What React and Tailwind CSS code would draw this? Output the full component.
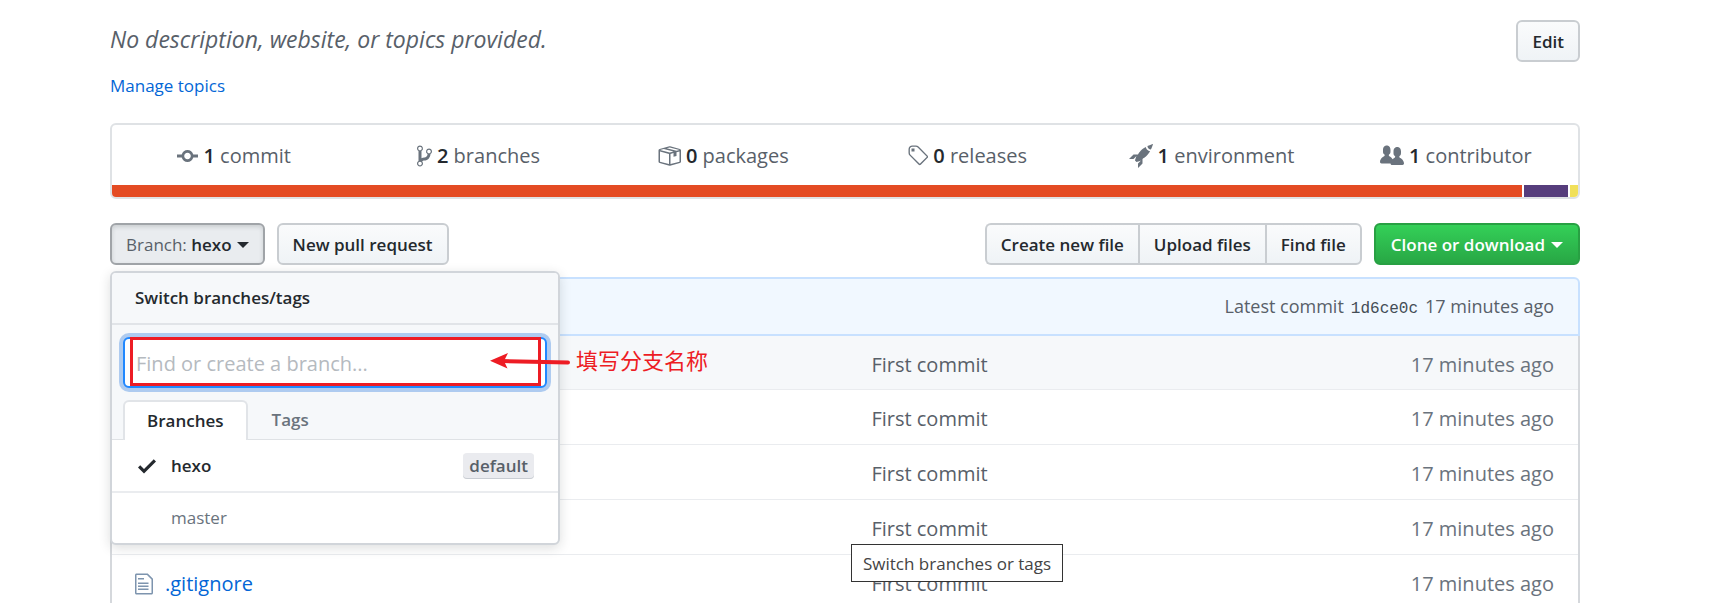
import React from "react";

const ICONS = {
  commit: {
    w: 14,
    d: "M10.86 7c-.45-1.72-2-3-3.86-3-1.86 0-3.41 1.28-3.86 3H0v2h3.14c.45 1.72 2 3 3.86 3 1.86 0 3.41-1.28 3.86-3H14V7h-3.14zM7 10.2c-1.22 0-2.2-.98-2.2-2.2 0-1.22.98-2.2 2.2-2.2 1.22 0 2.2.98 2.2 2.2 0 1.22-.98 2.2-2.2 2.2z",
  },
  branch: {
    w: 10,
    d: "M10 5c0-1.11-.89-2-2-2a1.993 1.993 0 0 0-1 3.72v.3c-.02.52-.23.98-.63 1.38-.4.4-.86.61-1.38.63-.83.02-1.48.16-2 .45V4.72a1.993 1.993 0 0 0-1-3.72C.88 1 0 1.89 0 3a2 2 0 0 0 1 1.72v6.56c-.59.35-1 .99-1 1.72 0 1.11.89 2 2 2 1.11 0 2-.89 2-2 0-.53-.2-1-.53-1.36.09-.06.48-.41.59-.47.25-.11.56-.17.94-.17 1.05-.05 1.95-.45 2.75-1.25S8.95 7.77 9 6.73h-.02C9.59 6.37 10 5.73 10 5zM2 1.8c.66 0 1.2.55 1.2 1.2 0 .65-.55 1.2-1.2 1.2C1.35 4.2.8 3.65.8 3c0-.65.55-1.2 1.2-1.2zm0 12.41c-.66 0-1.2-.55-1.2-1.2 0-.65.55-1.2 1.2-1.2.65 0 1.2.55 1.2 1.2 0 .65-.55 1.2-1.2 1.2zm6-8c-.66 0-1.2-.55-1.2-1.2 0-.65.55-1.2 1.2-1.2.65 0 1.2.55 1.2 1.2 0 .65-.55 1.2-1.2 1.2z",
  },
  box: {
    w: 16,
    d: "M1 4.27v7.47c0 .45.3.84.75.97l6.5 1.73c.16.05.34.05.5 0l6.5-1.73c.45-.13.75-.52.75-.97V4.27c0-.45-.3-.84-.75-.97l-6.5-1.74a1.4 1.4 0 0 0-.5 0L1.75 3.3c-.45.13-.75.52-.75.97zm7 9.09l-6-1.59V5l6 1.61v6.75zM2 4l2.5-.67L11 5.06l-2.5.67L2 4zm13 7.77l-6 1.59V6.61l2-.55V8.5l2-.53V5.53L15 5v6.77zm-2-7.24L6.5 2.8l2-.53L15 4l-2 .53z",
  },
  tag: {
    w: 14,
    d: "M7.73 1.73C7.26 1.26 6.62 1 5.96 1H3.5C2.13 1 1 2.13 1 3.5v2.47c0 .66.27 1.3.73 1.77l6.06 6.06c.39.39 1.02.39 1.41 0l4.59-4.59a.996.996 0 0 0 0-1.41L7.73 1.73zM2.38 7.09c-.31-.3-.47-.7-.47-1.13V3.5c0-.88.72-1.59 1.59-1.59h2.47c.42 0 .83.16 1.13.47l6.14 6.13-4.73 4.73-6.13-6.15zM3.01 3h2v2H3V3h.01z",
  },
  rocket: {
    w: 16,
    d: "M12.17 3.83c-.27-.27-.47-.55-.63-.88-.16-.31-.27-.66-.34-1.02-.58.33-1.16.7-1.73 1.13-.58.44-1.14.94-1.69 1.48-.7.7-1.33 1.81-1.78 2.45H3L0 10h3l2-2c-.34.77-1.02 2.98-1 3l1 1c.02.02 2.23-.64 3-1l-2 2v3l3-3v-3c.64-.45 1.75-1.09 2.45-1.78.55-.55 1.05-1.13 1.47-1.7.44-.58.81-1.16 1.14-1.72-.36-.08-.7-.19-1.03-.34a3.39 3.39 0 0 1-.86-.63zM16 0s-.09.38-.3 1.06c-.2.7-.55 1.58-1.06 2.66-.7-.08-1.27-.33-1.66-.72-.39-.39-.63-.94-.7-1.64C13.36.84 14.23.48 14.92.28 15.62.08 16 0 16 0z",
  },
  people: {
    w: 16,
    d: "M16 12.999c0 .439-.45 1-1 1H7.995c-.539 0-.994-.447-.995-.999H1c-.54 0-1-.561-1-1 0-2.634 3-4 3-4s.229-.409 0-1c-.841-.621-1.058-.59-1-3 .058-2.419 1.367-3 2.5-3s2.442.58 2.5 3c.058 2.41-.159 2.379-1 3-.229.59 0 1 0 1s1.549.711 2.42 2.088C9.196 9.369 10 8.999 10 8.999s.229-.409 0-1c-.841-.62-1.058-.59-1-3 .058-2.419 1.367-3 2.5-3s2.437.581 2.495 3c.059 2.41-.158 2.38-1 3-.229.59 0 1 0 1s3.005 1.366 3.005 4z",
  },
  file: {
    w: 12,
    d: "M6 5H2V4h4v1zM2 8h7V7H2v1zm0 2h7V9H2v1zm0 2h7v-1H2v1zm10-7.5V14c0 .55-.45 1-1 1H1c-.55 0-1-.45-1-1V2c0-.55.45-1 1-1h7.5L12 4.5zM11 5L8 2H1v12h10V5z",
  },
  check: { w: 12, d: "M12 5l-8 8-4-4 1.5-1.5L4 10l6.5-6.5L12 5z" },
};

function Icon({ name, className = "" }) {
  const { w, d } = ICONS[name];
  return (
    <svg
      aria-hidden="true"
      width={w * 1.5}
      height="24"
      viewBox={`0 0 ${w} 16`}
      fill="currentColor"
      className={`shrink-0 ${className}`}
    >
      <path fillRule="evenodd" d={d} />
    </svg>
  );
}

function Caret() {
  return (
    <svg aria-hidden="true" width="12" height="6" viewBox="0 0 12 6" fill="currentColor" className="shrink-0">
      <path d="M0 0h12L6 6z" />
    </svg>
  );
}

const BTN =
  "flex h-[42px] items-center border-2 border-[#c9cdd1] bg-linear-to-b from-[#fafbfc] to-[#eff3f6] px-3.5 pt-px text-[17px] font-semibold whitespace-nowrap";

const STATS = [
  ["commit", 1, "commit"],
  ["branch", 2, "branches"],
  ["box", 0, "packages"],
  ["tag", 0, "releases"],
  ["rocket", 1, "environment"],
  ["people", 1, "contributor"],
];

const FILES = ["", "", "", "", ".gitignore"];

function BranchMenu() {
  return (
    <div className="absolute top-full left-0 z-10 mt-1.5 w-[450px] rounded-md border-2 border-[#d1d5da] bg-white shadow-[0_3px_12px_rgba(27,31,35,0.15)]">
      <div className="rounded-t bg-[#f6f8fa]">
        <h2 className="flex h-[52px] items-center border-b-2 border-[#e1e4e8] px-[23px] text-[17px] font-semibold">
          Switch branches/tags
        </h2>
        <div className="relative px-[11px] pt-3">
          <input
            type="text"
            aria-label="Find or create a branch"
            placeholder="Find or create a branch..."
            className="block h-[51px] w-full rounded-md border-2 border-[#2188ff] bg-white px-[11px] pt-0.5 text-[20px] shadow-[0_0_0_4px_#aecbf0] outline-none placeholder:text-[#b5babf]"
          />
          <div className="pointer-events-none absolute top-3 right-[17px] left-[18px] h-[49px] border-3 border-[#ed1c24]" />
          <div className="pointer-events-none absolute top-5 left-[378px] flex items-center gap-[6px] text-[#ed1c24]">
            <svg aria-hidden="true" width="80" height="18" viewBox="0 0 80 18" className="shrink-0">
              <path d="M12 10L78 11.500" stroke="currentColor" strokeWidth="4" strokeLinecap="round" />
              <path d="M0 9.800L18 2L14 10L17.500 17.500z" fill="currentColor" />
            </svg>
            <span className="text-[22px] leading-[30px] whitespace-nowrap">填写分支名称</span>
          </div>
        </div>
        <div role="tablist" className="flex border-b border-[#dfe2e5] px-[11px] pt-3 text-[17px] font-semibold">
          <button
            role="tab"
            aria-selected="true"
            className="-mb-px h-10 rounded-t-md border-2 border-b-0 border-[#e1e4e8] bg-white px-[22px]"
          >
            Branches
          </button>
          <button role="tab" aria-selected="false" className="h-[39px] px-6 text-[#6a737d]">
            Tags
          </button>
        </div>
      </div>
      <ul className="text-[17px]">
        <li className="border-b-2 border-[#eaecef]">
          <button className="flex h-[51px] w-full items-center pr-6 pl-[26px]">
            <Icon name="check" />
            <span className="pl-[15px] font-semibold">hexo</span>
            <span className="ml-auto rounded bg-[#eaebef] px-1.5 leading-[26px] font-semibold text-[#586069] shadow-[inset_0_-1px_0_#c9cdd3]">
              default
            </span>
          </button>
        </li>
        <li>
          <button className="flex h-[50px] w-full items-center pl-[59px] text-[#6a737d]">master</button>
        </li>
      </ul>
    </div>
  );
}

export default function App() {
  return (
    <main className="relative h-screen overflow-hidden bg-white pt-5 pr-[137px] pl-[110px] font-['Open_Sans','Noto_Sans_CJK_SC',sans-serif] text-[#24292e]">
      <header className="flex items-start justify-between">
        <p className="text-[23px] leading-[38px] text-[#586069] italic">
          No description, website, or topics provided.
        </p>
        <button className={`${BTN} rounded-md`}>Edit</button>
      </header>
      <a href="#topics" className="mt-3 inline-block text-[17px] leading-6 text-[#0366d6]">
        Manage topics
      </a>

      <section className="mt-[25px] overflow-hidden rounded-md border-2 border-[#dfe2e5]">
        <ul className="grid h-[60px] grid-cols-6 pt-0.5 text-[20px]">
          {STATS.map(([icon, count, label]) => (
            <li key={label} className="flex items-center justify-center">
              <a href={`#${label}`} className="flex items-center gap-[5px] text-[#586069]">
                <Icon name={icon} className="text-[#6a737d]" />
                <span>
                  <span className="font-semibold text-[#24292e]">{count}</span> {label}
                </span>
              </a>
            </li>
          ))}
        </ul>
        <div className="flex h-3 gap-0.5">
          <span className="flex-1 bg-[#e44b23]" />
          <span className="w-[3%] bg-[#563d7c]" />
          <span className="w-2 bg-[#f1e05a]" />
        </div>
      </section>

      <div className="mt-6 flex items-center justify-between">
        <div className="flex gap-3">
          <div className="relative">
            <button className="flex h-[42px] items-center gap-[5px] rounded-md border-2 border-[#a0a4a8] bg-[#e9ecef] px-3.5 pt-px text-[17px] font-semibold whitespace-nowrap shadow-[inset_0_2px_4px_rgba(27,31,35,0.15)]">
              <span>
                <span className="font-normal text-[#586069]">Branch:</span> hexo
              </span>
              <Caret />
            </button>
            <BranchMenu />
          </div>
          <button className={`${BTN} rounded-md`}>New pull request</button>
        </div>
        <div className="flex gap-3">
          <div className="flex">
            <button className={`${BTN} rounded-l-md border-r-0`}>Create new file</button>
            <button className={`${BTN} border-r-0`}>Upload files</button>
            <button className={`${BTN} rounded-r-md`}>Find file</button>
          </div>
          <button className="flex h-[42px] items-center gap-1.5 rounded-md border-2 border-[#28a043] bg-linear-to-b from-[#34d058] to-[#28a745] px-[15px] pt-px text-[17px] font-semibold whitespace-nowrap text-white">
            Clone or download <Caret />
          </button>
        </div>
      </div>

      <section className="mt-3">
        <div className="flex h-[59px] items-center justify-end rounded-t-md border-2 border-[#c8e1ff] bg-[#f1f8ff] px-6 text-[18px] text-[#586069]">
          <p className="flex items-baseline gap-[7px]">
            <span>Latest commit</span>
            <a href="#1d6ce0c" className="font-['Liberation_Mono',monospace] text-base text-[#444d56]">
              1d6ce0c
            </a>
            <time>17 minutes ago</time>
          </p>
        </div>
        <table className="w-full border-separate border-spacing-0 border-x-2 border-[#d5d8dc] text-[20px] text-[#6a737d]">
          <tbody>
            {FILES.map((name, i) => (
              <tr key={i} className="h-[55px] first:h-[54px] first:bg-[#f6f8fa]">
                <td className="w-[51.8%] border-b border-[#eaecef] pt-1 pl-[23px]">
                  {name && (
                    <a href="#gitignore" className="flex items-center gap-3 text-[#0366d6]">
                      <Icon name="file" className="text-[#7d94ae]" />
                      {name}
                    </a>
                  )}
                </td>
                <td className="border-b border-[#eaecef] pt-1 text-[#586069]">First commit</td>
                <td className="border-b border-[#eaecef] pt-1 pr-6 text-right">17 minutes ago</td>
              </tr>
            ))}
          </tbody>
        </table>
      </section>

      <div
        role="tooltip"
        className="absolute top-[544px] left-[851px] z-20 flex h-[38px] items-center border border-[#333] bg-white px-[11px] pt-px text-[17px] text-[#444]"
      >
        Switch branches or tags
      </div>
    </main>
  );
}
